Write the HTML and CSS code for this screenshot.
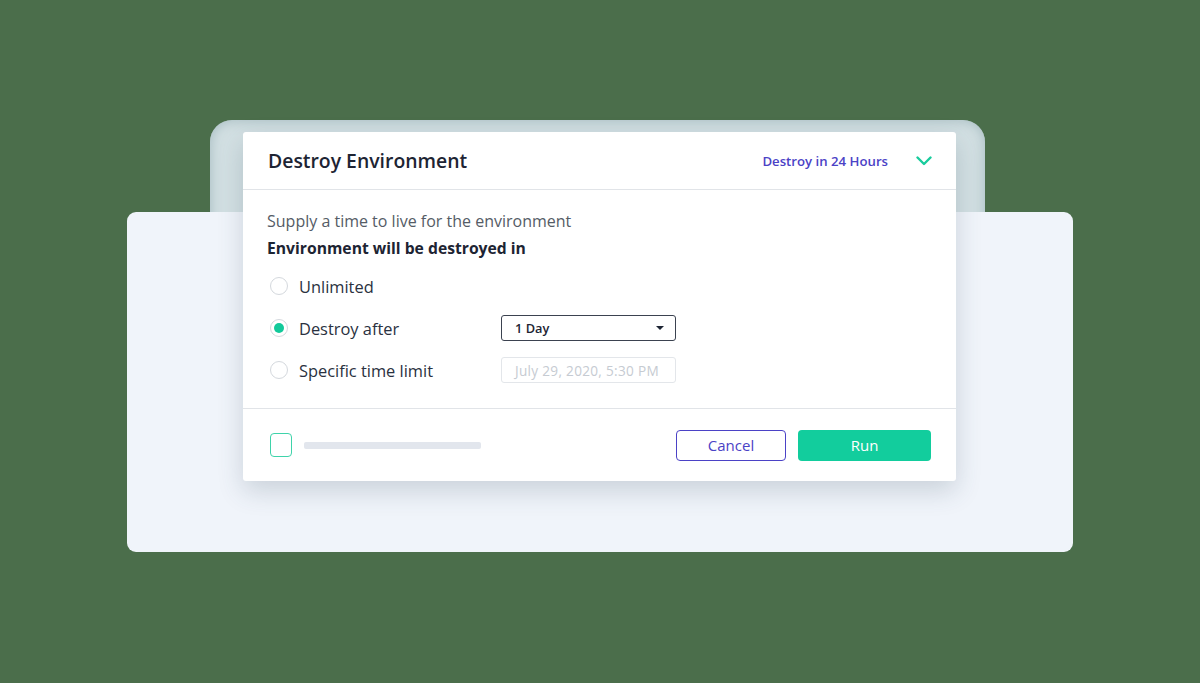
FILE: index.html
```html
<!DOCTYPE html>
<html lang="en">

<head>
    <meta charset="UTF-8">
    <meta name="viewport" content="width=device-width, initial-scale=1.0">
    <title>Destroy Environment</title>
    <link rel="stylesheet" href="styles.css">
</head>

<body>
    <div class="scene">
        <div class="halo"></div>

        <div class="modal">
            <div class="modal-header">
                <div class="title">Destroy Environment</div>
                <div class="ttl-summary">
                    <span>Destroy in 24 Hours</span>
                    <svg class="chevron" width="16" height="10" viewBox="0 0 16 10">
                        <path d="M1.5 1.5 L8 8 L14.5 1.5" fill="none" stroke="#19cc9d" stroke-width="2.4" stroke-linecap="round" stroke-linejoin="round"/>
                    </svg>
                </div>
            </div>

            <div class="modal-body">
                <p class="hint">Supply a time to live for the environment</p>
                <p class="lead">Environment will be destroyed in</p>

                <div class="options">
                    <div class="option">
                        <label class="choice"><span class="radio"></span>Unlimited</label>
                    </div>
                    <div class="option">
                        <label class="choice"><span class="radio checked"></span>Destroy after</label>
                        <div class="select">
                            <span>1 Day</span>
                            <span class="caret"></span>
                        </div>
                    </div>
                    <div class="option">
                        <label class="choice"><span class="radio"></span>Specific time limit</label>
                        <div class="date-input">July 29, 2020, 5:30 PM</div>
                    </div>
                </div>
            </div>

            <div class="modal-footer">
                <div class="remember">
                    <span class="checkbox"></span>
                    <span class="placeholder-bar"></span>
                </div>
                <div class="actions">
                    <button class="btn btn-cancel">Cancel</button>
                    <button class="btn btn-run">Run</button>
                </div>
            </div>
        </div>
    </div>
</body>

</html>
```

FILE: styles.css
```css
body {
    background-color: #4b6e4b;
    margin: 0;
    font-family: "Open Sans", "Lato", sans-serif;
    color: #1d2433;
}

.scene {
    position: relative;
    width: 946px;
    height: 340px;
    margin: 212px auto 0;
    background-color: #f0f4fa;
    border-radius: 9px;
}

/* soft glow of the dialog sticking out above the panel */
.halo {
    position: absolute;
    left: 83px;
    top: -92px;
    width: 775px;
    height: 140px;
    z-index: -1;
    border-radius: 22px;
    background-color: #d3e0e3;
    box-shadow: inset 0 0 14px #a3b9be;
}

.modal {
    position: absolute;
    left: 116px;
    top: -80px;
    width: 713px;
    height: 349px;
    background: #fff;
    border-radius: 3px;
    box-shadow: 0 10px 26px rgba(50, 75, 95, 0.2);
    display: flex;
    flex-direction: column;
}

.modal-header {
    height: 58px;
    box-sizing: border-box;
    padding: 0 24px 0 25px;
    border-bottom: 1px solid #e1e4e8;
    display: flex;
    align-items: center;
    justify-content: space-between;
}

.title {
    font-size: 19.4px;
    font-weight: 600;
    color: #1d2433;
}

.ttl-summary {
    display: flex;
    align-items: center;
    gap: 28px;
    font-size: 13.2px;
    font-weight: 600;
    color: #4b42c6;
}

.chevron {
    display: block;
}

.modal-body {
    padding: 20px 24px 21px;
}

.hint {
    margin: 0;
    font-size: 16px;
    line-height: 22px;
    color: #555c66;
}

.lead {
    margin: 5px 0 0;
    font-size: 15.7px;
    line-height: 22px;
    font-weight: 700;
    color: #1d2433;
}

.options {
    margin-top: 10px;
    display: grid;
    grid-auto-rows: 34px;
    gap: 8px;
}

.option {
    display: grid;
    grid-template-columns: 234px 175px;
    align-items: center;
}

.choice {
    display: flex;
    align-items: center;
    gap: 11px;
    padding-left: 3px;
    font-size: 16.4px;
    color: #2a3140;
}

.radio {
    width: 18px;
    height: 18px;
    box-sizing: border-box;
    border: 1.5px solid #d4d8dd;
    border-radius: 50%;
    display: flex;
    align-items: center;
    justify-content: center;
}

.radio.checked::after {
    content: "";
    width: 10px;
    height: 10px;
    border-radius: 50%;
    background: #12c99a;
}

.select,
.date-input {
    height: 26px;
    box-sizing: border-box;
    border-radius: 3px;
    padding: 0 11px 0 13px;
    display: flex;
    align-items: center;
    font-size: 12.8px;
}

.select {
    border: 1.5px solid #3b4250;
    justify-content: space-between;
    font-weight: 600;
    color: #1d2433;
}

.caret {
    width: 0;
    height: 0;
    border-left: 4px solid transparent;
    border-right: 4px solid transparent;
    border-top: 4px solid #1d2433;
}

.date-input {
    border: 1px solid #e3e6ea;
    color: #c6cbd2;
    font-size: 13.6px;
    letter-spacing: 0.3px;
}

.modal-footer {
    flex: 1;
    border-top: 1px solid #e1e4e8;
    padding: 0 25px 0 27px;
    display: flex;
    align-items: center;
    justify-content: space-between;
}

.remember {
    display: flex;
    align-items: center;
    gap: 12px;
}

.checkbox {
    width: 22px;
    height: 24px;
    box-sizing: border-box;
    border: 1.5px solid #3fd3aa;
    border-radius: 4px;
}

.placeholder-bar {
    width: 177px;
    height: 7px;
    border-radius: 2px;
    background: #e2e6ed;
}

.actions {
    display: flex;
    gap: 12px;
}

.btn {
    height: 31px;
    border-radius: 4px;
    font-family: inherit;
    font-size: 15px;
    cursor: pointer;
}

.btn-cancel {
    width: 110px;
    background: #fff;
    border: 1.5px solid #4b42c6;
    color: #4b42c6;
}

.btn-run {
    width: 133px;
    background: #12cd9d;
    border: none;
    color: #fff;
}
```
